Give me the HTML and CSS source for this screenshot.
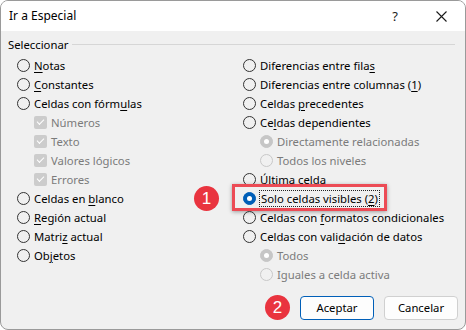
FILE: index.html
```html
<!DOCTYPE html>
<html lang="es">
<head>
    <meta charset="UTF-8">
    <title>Ir a Especial</title>
    <link rel="stylesheet" href="styles.css">
</head>
<body>
    <div class="dialog">
        <div class="titlebar">
            <span class="title">Ir a Especial</span>
            <span class="help">?</span>
            <svg class="close" width="11" height="11" viewBox="0 0 11 11">
                <path d="M0.5 0.5 L10.5 10.5 M10.5 0.5 L0.5 10.5" stroke="#1a1a1a" stroke-width="1.1"/>
            </svg>
        </div>
        <div class="content">
            <div class="group-title">
                <span>Seleccionar</span>
                <div class="line"></div>
            </div>
            <div class="columns">
                <div class="col">
                    <div class="opt"><span class="radio"></span><span><u>N</u>otas</span></div>
                    <div class="opt"><span class="radio"></span><span><u>C</u>onstantes</span></div>
                    <div class="opt"><span class="radio"></span><span>Celdas con fórm<u>u</u>las</span></div>
                    <div class="opt sub disabled"><span class="check"></span><span>Números</span></div>
                    <div class="opt sub disabled"><span class="check"></span><span>Texto</span></div>
                    <div class="opt sub disabled"><span class="check"></span><span>Valores lógicos</span></div>
                    <div class="opt sub disabled"><span class="check"></span><span>Errores</span></div>
                    <div class="opt"><span class="radio"></span><span>Celdas en <u>b</u>lanco</span></div>
                    <div class="opt"><span class="radio"></span><span><u>R</u>egión actual</span></div>
                    <div class="opt"><span class="radio"></span><span>Matri<u>z</u> actual</span></div>
                    <div class="opt"><span class="radio"></span><span>Ob<u>j</u>etos</span></div>
                </div>
                <div class="col">
                    <div class="opt"><span class="radio"></span><span>Diferencias entre fila<u>s</u></span></div>
                    <div class="opt"><span class="radio"></span><span>Diferencias entre columnas (<u>1</u>)</span></div>
                    <div class="opt"><span class="radio"></span><span>Celdas <u>p</u>recedentes</span></div>
                    <div class="opt"><span class="radio"></span><span>Ce<u>l</u>das dependientes</span></div>
                    <div class="opt sub disabled"><span class="radio dot"></span><span>Directamente relacionadas</span></div>
                    <div class="opt sub disabled"><span class="radio"></span><span>Todos los niveles</span></div>
                    <div class="opt"><span class="radio"></span><span>Última celda</span></div>
                    <div class="opt highlighted">
                        <span class="badge badge-left">1</span>
                        <span class="radio selected"></span><span class="focus">Solo celdas visibles (<u>2</u>)</span>
                    </div>
                    <div class="opt"><span class="radio"></span><span>Celdas con <u>f</u>ormatos condicionales</span></div>
                    <div class="opt"><span class="radio"></span><span>Celdas con vali<u>d</u>ación de datos</span></div>
                    <div class="opt sub disabled"><span class="radio dot"></span><span>Todos</span></div>
                    <div class="opt sub disabled"><span class="radio"></span><span>Iguales a celda activa</span></div>
                </div>
            </div>
            <div class="footer">
                <span class="badge">2</span>
                <button class="btn primary">Aceptar</button>
                <button class="btn">Cancelar</button>
            </div>
        </div>
    </div>
</body>
</html>
```

FILE: styles.css
```css
body {
    margin: 0;
    font-family: "Noto Sans", sans-serif;
    font-size: 11.3px;
    color: #000;
    background: #fff;
}
.dialog {
    width: 466px;
    height: 330px;
    box-sizing: border-box;
    border: 1px solid #9a9a9a;
    border-radius: 8px;
    overflow: hidden;
    background: #f0f0f0;
    display: flex;
    flex-direction: column;
}
.titlebar {
    height: 30px;
    background: #fff;
    display: flex;
    align-items: center;
    padding: 0 18px 0 8px;
    flex-shrink: 0;
}
.title {
    font-size: 12px;
    flex: 1;
    padding-bottom: 1px;
}
.help {
    font-size: 13px;
    margin-right: 38px;
    color: #1a1a1a;
}
.close {
    display: block;
}
.content {
    flex: 1;
    display: flex;
    flex-direction: column;
    padding: 4px 7px 0 7px;
}
.group-title {
    display: flex;
    align-items: center;
    height: 19px;
    margin-bottom: 2px;
}
.group-title .line {
    flex: 1;
    height: 1px;
    background: #d6d6d6;
    margin: 0 3px 0 4px;
}
.columns {
    display: grid;
    grid-template-columns: 226px 1fr;
    padding-left: 9px;
}
.opt {
    height: 19px;
    display: flex;
    align-items: center;
    white-space: nowrap;
    position: relative;
}
.opt.sub {
    padding-left: 17px;
}
.opt.disabled {
    color: #7b7b7b;
}
.opt u {
    text-decoration-thickness: 1px;
    text-underline-offset: 2px;
}
.radio {
    width: 11px;
    height: 11px;
    border: 1px solid #333;
    border-radius: 50%;
    margin-right: 4px;
    flex-shrink: 0;
    box-sizing: content-box;
    position: relative;
}
.disabled .radio {
    border-color: #c8c8c8;
}
.radio.dot {
    background: #c6c6c6;
    border-color: #c6c6c6;
}
.radio.dot::after, .radio.selected::after {
    content: "";
    position: absolute;
    width: 5px;
    height: 5px;
    left: 3px;
    top: 3px;
    border-radius: 50%;
    background: #fff;
}
.radio.selected {
    background: #005fb8;
    border-color: #005fb8;
}
.check {
    width: 13px;
    height: 13px;
    border-radius: 2px;
    background: #cccccc;
    margin-right: 4px;
    position: relative;
    flex-shrink: 0;
}
.check::after {
    content: "";
    position: absolute;
    left: 3px;
    top: 3px;
    width: 6px;
    height: 3px;
    border-left: 1px solid #fff;
    border-bottom: 1px solid #fff;
    transform: rotate(-45deg);
}
.focus {
    outline: 1px dotted #222;
    outline-offset: 0;
    padding: 0 1px;
    line-height: 15px;
}
.highlighted::before {
    content: "";
    position: absolute;
    left: -11px;
    top: -5px;
    width: 149px;
    height: 21px;
    border: 3px solid #ec4b55;
    box-shadow: 0 1px 4px rgba(0, 0, 0, 0.35);
}
.badge {
    width: 25px;
    height: 25px;
    border-radius: 50%;
    background: #e9343f;
    color: #fff;
    font-family: "Liberation Sans", sans-serif;
    font-size: 17px;
    display: flex;
    align-items: center;
    justify-content: center;
}
.badge-left {
    position: absolute;
    left: -49px;
    top: -3px;
}
.footer {
    display: flex;
    justify-content: flex-end;
    align-items: center;
    gap: 10px;
    margin-top: 11px;
}
.btn {
    width: 74px;
    height: 24px;
    font-family: "Noto Sans", sans-serif;
    font-size: 11.3px;
    background: #fdfdfd;
    border: 1px solid #d0d0d0;
    border-radius: 4px;
    color: #000;
    padding: 0;
}
.btn.primary {
    border-color: #005fb8;
}
```
